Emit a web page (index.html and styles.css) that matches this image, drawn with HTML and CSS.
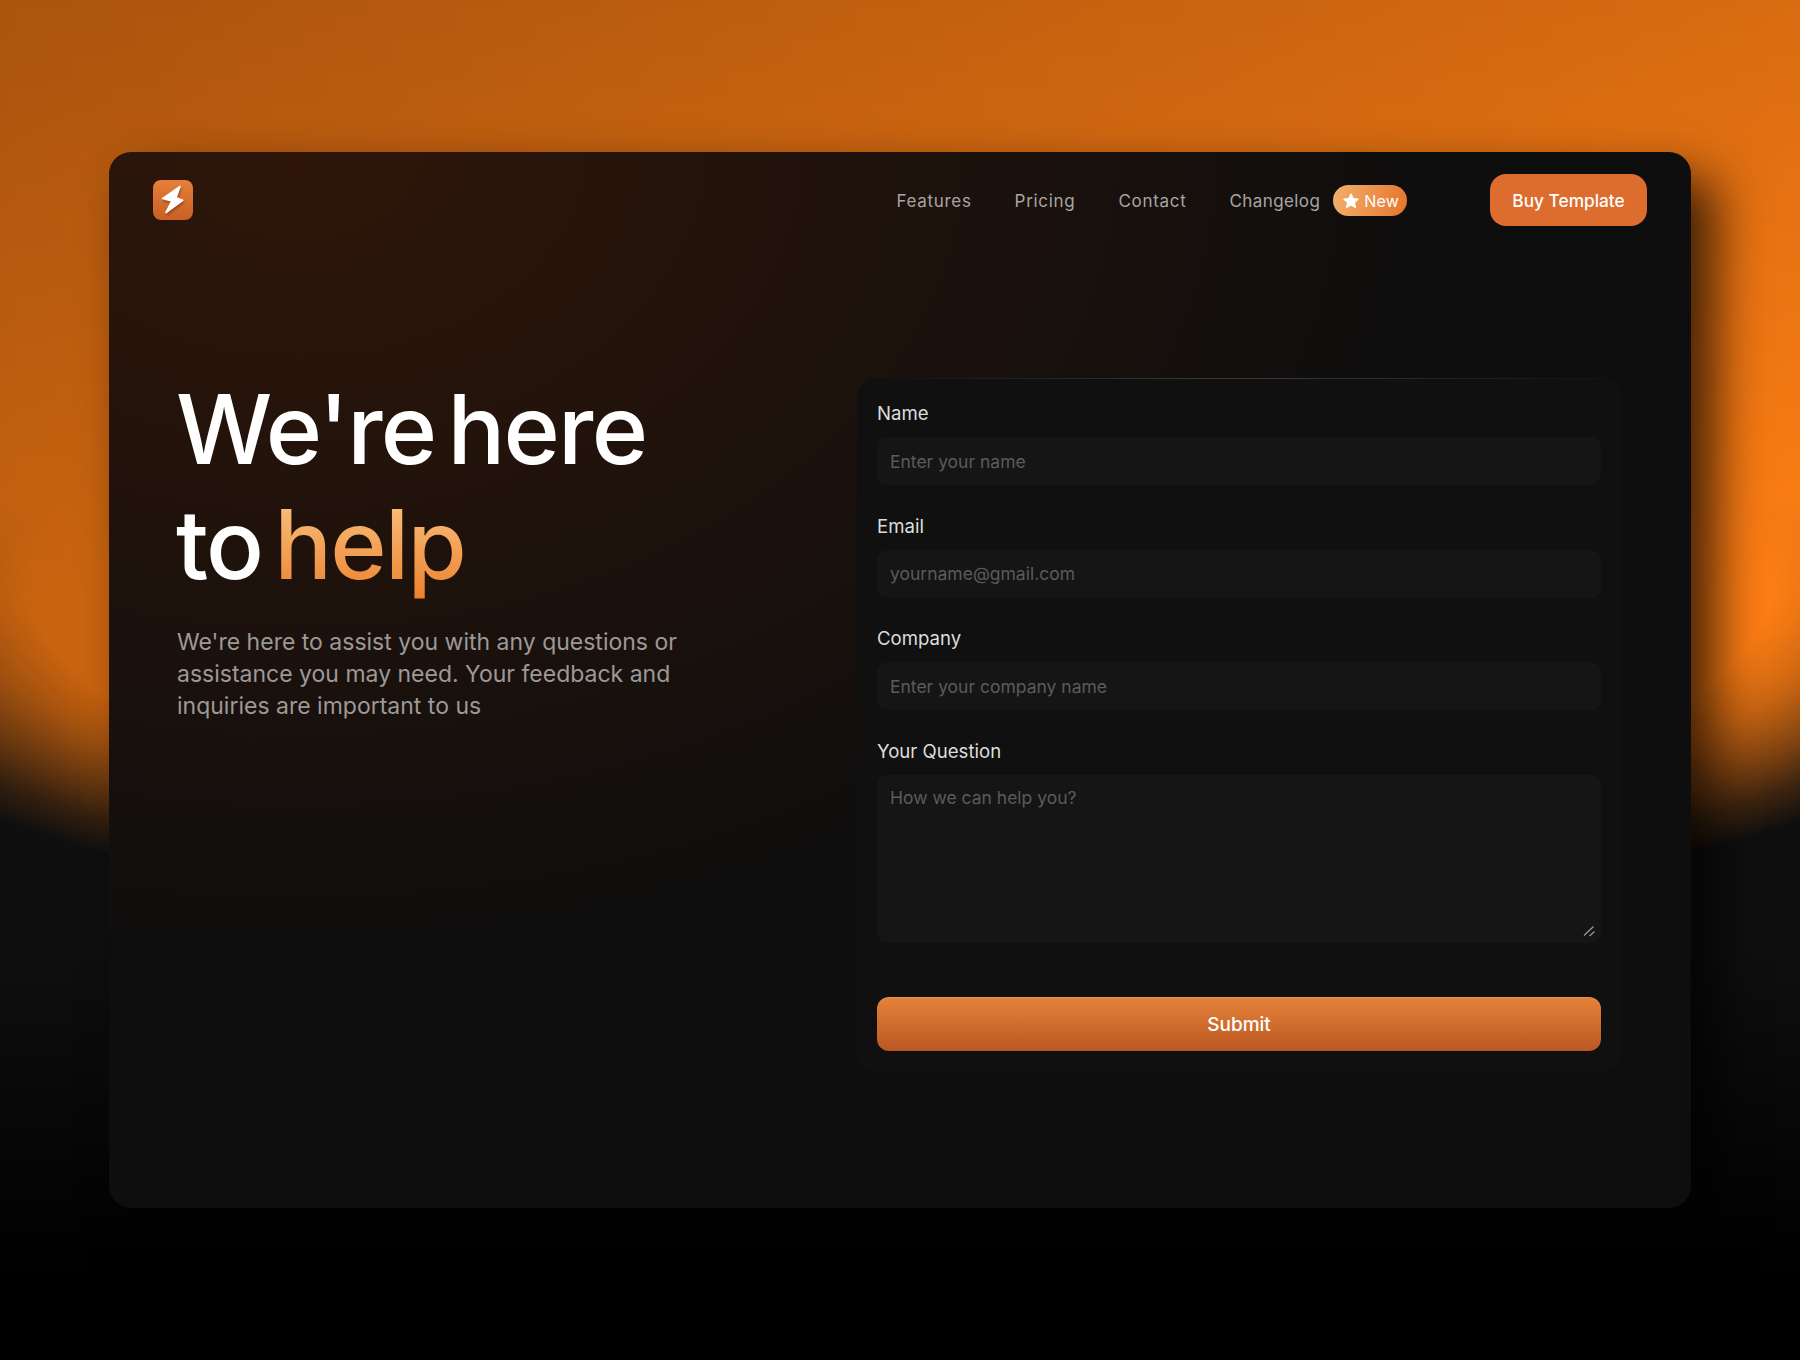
FILE: index.html
```html
<!DOCTYPE html>
<html lang="en">
<head>
<meta charset="utf-8">
<title>Contact</title>
<link rel="stylesheet" href="styles.css">
</head>
<body>
<div class="glow"></div>
<main class="window">
  <header class="nav">
    <a class="logo" href="#">
      <svg class="bolt" viewBox="0 0 40 40" width="40" height="40"><path d="M27 6.500 9.500 18.600 18.700 21 13 32.500 29.700 20.300 23 17.700z" fill="#fff" stroke="#fff" stroke-width="1.600" stroke-linejoin="round"/></svg>
    </a>
    <nav class="links">
      <a href="#">Features</a>
      <a href="#">Pricing</a>
      <a href="#">Contact</a>
      <span class="changelog"><a href="#">Changelog</a>
        <span class="badge"><svg viewBox="0 0 24 24" width="18" height="18"><path d="M12 2.500l2.900 6.200 6.700.8-5 4.600 1.400 6.700-6-3.400-6 3.400 1.400-6.700-5-4.600 6.700-.8z" fill="#fff" stroke="#fff" stroke-width="1.500" stroke-linejoin="round"/></svg>New</span>
      </span>
    </nav>
    <a class="buy" href="#">Buy Template</a>
  </header>
  <section class="content">
    <div class="hero">
      <h1><span class="line">We're here</span><span class="line">to <span class="accent">help</span></span></h1>
      <p>We're here to assist you with any questions or assistance you may need. Your feedback and inquiries are important to us</p>
    </div>
    <form class="card">
      <label class="field"><span>Name</span><input type="text" placeholder="Enter your name"></label>
      <label class="field"><span>Email</span><input type="text" placeholder="yourname@gmail.com"></label>
      <label class="field"><span>Company</span><input type="text" placeholder="Enter your company name"></label>
      <label class="field"><span>Your Question</span>
        <span class="area"><textarea placeholder="How we can help you?"></textarea>
          <svg class="grip" viewBox="0 0 12 12" width="12" height="12"><path d="M1 10.500 10.500 1.500M6.500 11 11.500 6.500" stroke="#9a9a9a" stroke-width="1.200" fill="none"/></svg>
        </span>
      </label>
      <button type="button" class="submit">Submit</button>
    </form>
  </section>
</main>
</body>
</html>
```
FILE: styles.css
```css
* { box-sizing: border-box; }
html, body { margin: 0; height: 100%; }
body {
  position: relative;
  height: 1360px;
  overflow: hidden;
  padding: 152px 109px 0;
  background: linear-gradient(180deg, #0f0f0f 0, #0f0f0f 950px, #000 1280px);
  font-family: Inter, "Noto Sans", sans-serif;
  color: #fff;
}
a { color: inherit; text-decoration: none; }
.glow {
  position: absolute;
  inset: 0;
  background:
    linear-gradient(180deg, rgba(0,0,0,.15) 0, rgba(0,0,0,0) 600px),
    linear-gradient(90deg, rgba(0,0,0,.22) 0, rgba(0,0,0,0) 1800px),
    #ff7e14;
  -webkit-mask-image:
    linear-gradient(180deg, #000 500px, transparent 640px),
    radial-gradient(1000px 310px at 900px 585px, #000 87%, rgba(0,0,0,.8) 94%, rgba(0,0,0,.5) 102%, rgba(0,0,0,.2) 110%, transparent 118%);
  mask-image:
    linear-gradient(180deg, #000 500px, transparent 640px),
    radial-gradient(1000px 310px at 900px 585px, #000 87%, rgba(0,0,0,.8) 94%, rgba(0,0,0,.5) 102%, rgba(0,0,0,.2) 110%, transparent 118%);
}
.window {
  position: relative;
  height: 1056px;
  border-radius: 22px;
  background:
    radial-gradient(1150px 820px at 12% 0, #2f1609 0, rgba(47,22,9,0) 100%),
    #0e0e0e;
  box-shadow: 25px 25px 50px rgba(0,0,0,.72);
  padding: 22px 44px 0;
}
.nav { display: flex; align-items: center; height: 52px; }
.logo {
  width: 40px; height: 40px; border-radius: 8px;
  background: linear-gradient(180deg, #e58039, #c85f26);
}
.bolt { display: block; filter: drop-shadow(1px 2px 1px rgba(90,30,0,.45)); }
.links {
  margin-left: auto;
  padding-top: 1px;
  display: flex; align-items: center; gap: 43px;
  font-size: 17px; letter-spacing: .7px; color: #a8a5a3;
}
.changelog { display: flex; align-items: center; gap: 13px; letter-spacing: .4px; }
.badge {
  display: flex; align-items: center; gap: 4px;
  height: 31px; padding: 0 8px 0 9px;
  border-radius: 16px;
  color: #fff; font-size: 16px; letter-spacing: .2px;
  background: linear-gradient(100deg, #f2b06c, #e6752c);
}
.buy {
  margin-left: 83px;
  width: 157px; height: 52px;
  display: flex; align-items: center; justify-content: center;
  border-radius: 16px;
  background: #dd6c2f;
  font-size: 17.300px; font-weight: 500;
}
.content { display: flex; justify-content: space-between; padding: 152px 25px 0 24px; }
.hero { width: 520px; margin-top: -6px; }
h1 { margin: 0 0 0 -1px; font-size: 96px; line-height: 115px; font-weight: 500; letter-spacing: -1.700px; word-spacing: -12px; }
.line { display: block; }
.accent {
  background: linear-gradient(180deg, #fbc98a, #ec7f2a);
  -webkit-background-clip: text; background-clip: text; color: transparent;
}
.hero p { margin: 24px 0 0; width: 512px; font-size: 23px; line-height: 32px; color: #9c9997; }
.card {
  width: 765px; height: 693px;
  padding: 24px 21px 0 20px;
  border-radius: 20px;
  background:
    linear-gradient(90deg, rgba(70,70,70,0), rgba(70,70,70,.8) 50%, rgba(70,70,70,0)) top / 100% 1px no-repeat,
    #101010;
  display: flex; flex-direction: column; gap: 29.600px;
}
.field { display: flex; flex-direction: column; gap: 13px; font-size: 18.600px; color: #ddd; }
.field input, .field textarea {
  display: block; width: 100%;
  border: 0; outline: 0; border-radius: 10px;
  background: #151515; color: #ddd;
  font: inherit; font-size: 17.500px; padding: 0 13px;
}
.field input { height: 48px; }
.area { position: relative; display: block; }
.field textarea { height: 168px; padding: 12px 13px; resize: none; }
.grip { position: absolute; right: 6px; bottom: 6px; }
::placeholder { color: #5b5b5b; opacity: 1; }
.submit {
  margin-top: 25px;
  height: 54px; border: 0; border-radius: 12px;
  background: linear-gradient(180deg, #e5833a, #bb5722);
  box-shadow: inset 0 1px rgba(255,255,255,.12);
  color: #fff; font: 500 19px Inter, sans-serif;
}
```
